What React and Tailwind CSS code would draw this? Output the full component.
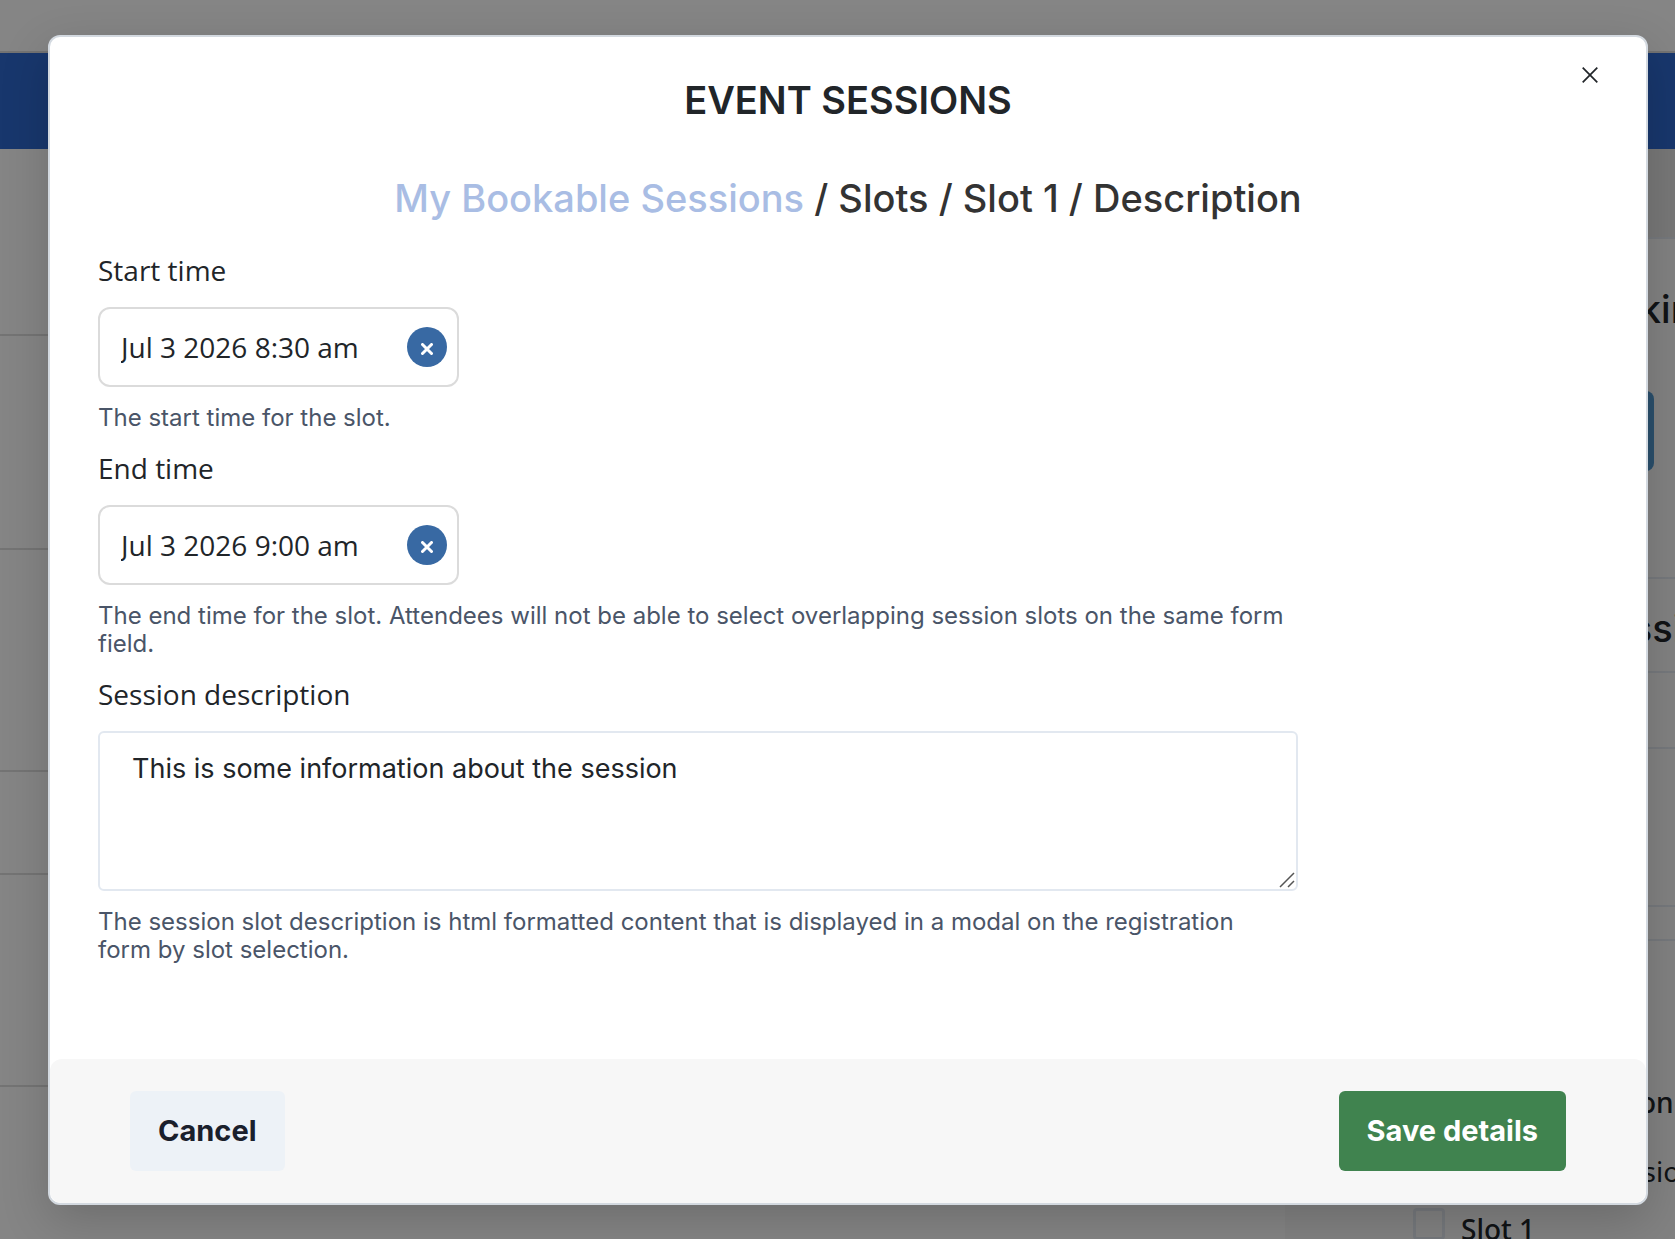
import { useState } from 'react';

const LEFT_ROWS = [
  { key: 'row-1', height: 'h-[187px]' },
  { key: 'row-2', height: 'h-[214px]' },
  { key: 'row-3', height: 'h-[222px]' },
  { key: 'row-4', height: 'h-[103px]' },
  { key: 'row-5', height: 'h-[212px]' },
];

/** Page that stays visible, dimmed, around the dialog. */
function PageBehind() {
  return (
    <div className="absolute inset-0 flex flex-col overflow-hidden bg-white" aria-hidden>
      <div className="h-[53px] shrink-0 border-b-2 border-[#dcdcdc]" />
      <div className="h-24 shrink-0 bg-[#2e6ad2]" />
      <div className="flex min-h-0 flex-1">
        <div className="min-w-0 flex-1">
          {LEFT_ROWS.map((row) => (
            <div key={row.key} className={`border-b-2 border-[#dfdfdf] ${row.height}`} />
          ))}
        </div>
        <div className="w-[390px] shrink-0 overflow-hidden whitespace-nowrap bg-[#fafafa] text-[#212529]">
          <div className="h-[90px] border-b-2 border-[#e2e8f0] bg-[#e6e6e6]" />
          <div className="flex h-[340px] flex-col items-start gap-14 border-b-2 border-[#e2e8f0] pt-11">
            <div className="pl-[284px] text-[38px] leading-[52px] font-medium">Booking</div>
            <div className="h-20 w-[369px] rounded-lg bg-[#5198d0]" />
          </div>
          <div className="h-[94px] border-b-2 border-[#e2e8f0] pt-[23px] pl-[300px] text-[38px] leading-[52px] font-medium">
            Sessions
          </div>
          <div className="h-[76px] border-b-2 border-[#e2e8f0]" />
          <div className="h-[158px] border-b-2 border-[#e2e8f0]" />
          <div className="h-[34px] border-b-2 border-[#e2e8f0]" />
          <div className="flex flex-col pt-[140px] font-['Noto_Sans'] text-[28px] leading-[42px]">
            <div className="mb-[27px] self-start pl-[235px] font-medium">Description</div>
            <div className="mb-4 self-start pl-[313px]">Session</div>
            <div className="flex items-start gap-4 pl-32 font-medium">
              <span className="h-8 w-8 rounded-sm border-3 border-[#e2e8f0]" />
              <span>Slot 1</span>
            </div>
          </div>
        </div>
      </div>
      <div className="absolute inset-0 bg-black/48" />
    </div>
  );
}

/** @param {{ id: string; label: string; help: string; children: React.ReactNode }} props */
function Field({ id, label, help, children }) {
  return (
    <div className="mb-[15px]">
      <label htmlFor={id} className="mb-4 block font-['Open_Sans'] text-[28px] leading-[42px]">
        {label}
      </label>
      {children}
      <p id={`${id}-help`} className="mt-[17px] pr-[10px] text-2xl leading-7 text-[#4a5568]">
        {help}
      </p>
    </div>
  );
}

/** @param {{ id: string; name: string; initial: string }} props */
function DateTimeInput({ id, name, initial }) {
  const [value, setValue] = useState(initial);

  return (
    <div className="flex h-20 w-[361px] items-center rounded-xl border-2 border-[#dbdbdb] bg-white pr-[10px] pl-[21px]">
      <input
        id={id}
        type="text"
        value={value}
        onChange={(e) => setValue(e.target.value)}
        aria-describedby={`${id}-help`}
        className="min-w-0 flex-1 bg-transparent font-['Open_Sans'] text-[28px] leading-[42px] outline-none"
      />
      <button
        type="button"
        onClick={() => setValue('')}
        aria-label={`Clear ${name}`}
        className="flex h-10 w-10 shrink-0 items-center justify-center rounded-full bg-[#3869a3] pt-1 text-white"
      >
        <svg viewBox="0 0 12 12" className="h-3 w-3" stroke="currentColor" strokeWidth="3" strokeLinecap="round">
          <path d="M1.5 1.5l9 9M10.5 1.5l-9 9" />
        </svg>
      </button>
    </div>
  );
}

export default function App() {
  const [description, setDescription] = useState('This is some information about the session');

  return (
    <div className="relative min-h-screen overflow-hidden font-['Inter',sans-serif] text-[#212529]">
      <PageBehind />
      <div className="relative pt-[35px] pr-[27px] pb-[34px] pl-12">
        <form
          role="dialog"
          aria-modal="true"
          aria-labelledby="dialog-title"
          onSubmit={(e) => e.preventDefault()}
          className="relative rounded-xl border-2 border-[#d3d9e0] bg-white shadow-[0_16px_48px_rgba(0,0,0,0.18)]"
        >
          <button type="button" aria-label="Close" className="absolute top-5 right-[38px] flex h-9 w-9 items-center justify-center">
            <svg viewBox="0 0 16 16" className="h-4 w-4" stroke="currentColor" strokeWidth="1.7">
              <path d="M.7.7l14.6 14.6M15.3.7L.7 15.3" />
            </svg>
          </button>

          <div className="px-12 pt-[37px] pb-20">
            <h2 id="dialog-title" className="text-center text-[38px] leading-[52px] font-semibold">
              EVENT SESSIONS
            </h2>
            <h3 className="mt-[46px] mb-[25px] text-center text-[38px] leading-[52px] font-medium text-[#333]">
              <a href="#sessions" className="text-[#a9bde4]">
                My Bookable Sessions
              </a>{' '}
              / Slots / Slot 1 / Description
            </h3>

            <div className="max-w-[1200px]">
              <Field id="start-time" label="Start time" help="The start time for the slot.">
                <DateTimeInput id="start-time" name="start time" initial="Jul 3 2026 8:30 am" />
              </Field>
              <Field
                id="end-time"
                label="End time"
                help="The end time for the slot. Attendees will not be able to select overlapping session slots on the same form field."
              >
                <DateTimeInput id="end-time" name="end time" initial="Jul 3 2026 9:00 am" />
              </Field>
              <Field
                id="description"
                label="Session description"
                help="The session slot description is html formatted content that is displayed in a modal on the registration form by slot selection."
              >
                <div className="relative">
                  <textarea
                    id="description"
                    value={description}
                    onChange={(e) => setDescription(e.target.value)}
                    aria-describedby="description-help"
                    className="block h-40 w-full resize-none rounded-md border-2 border-[#e2e8f0] px-8 py-[15px] text-[27px] leading-[42px] outline-none"
                  />
                  <svg
                    viewBox="0 0 16 16"
                    className="absolute right-[3px] bottom-[3px] h-4 w-4 text-[#555]"
                    stroke="currentColor"
                    strokeWidth="1.5"
                    aria-hidden
                  >
                    <path d="M1 15L15 1M9 15l6-6" />
                  </svg>
                </div>
              </Field>
            </div>
          </div>

          <div className="flex items-center justify-between rounded-xl bg-[#f7f7f7] px-20 py-8">
            <button type="button" className="h-20 rounded-md bg-[#edf2f7] px-7 text-[29px] leading-[42px] font-bold text-[#1a202c]">
              Cancel
            </button>
            <button type="submit" className="h-20 rounded-md bg-[#40834f] px-7 text-[29px] leading-[42px] font-bold text-white">
              Save details
            </button>
          </div>
        </form>
      </div>
    </div>
  );
}
